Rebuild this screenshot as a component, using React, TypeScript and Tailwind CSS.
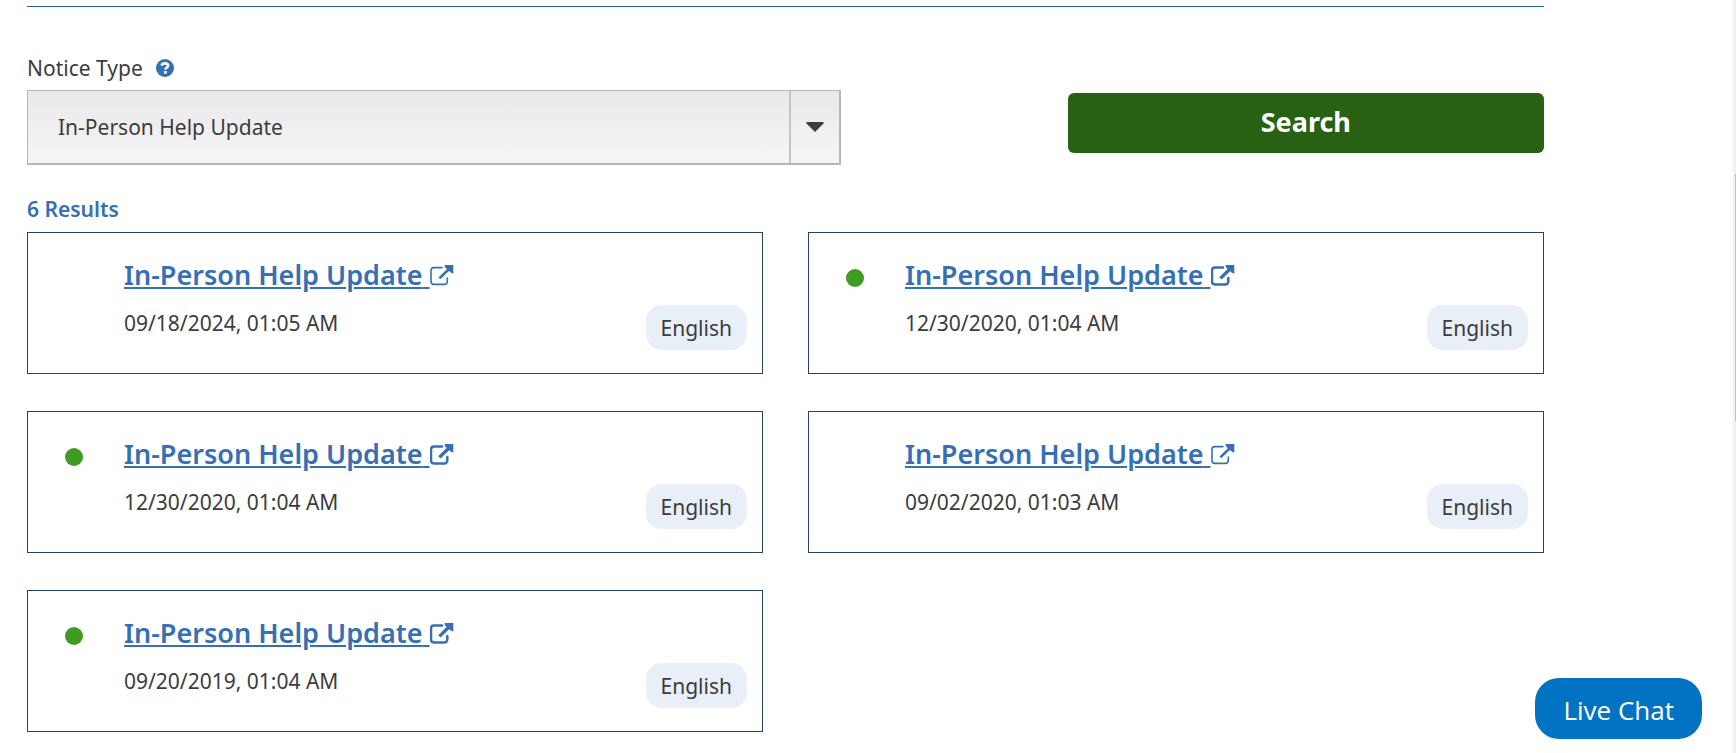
import { useState } from "react";

interface Notice {
  id: number;
  title: string;
  date: string;
  language: string;
  unread: boolean;
}

const notices: Notice[] = [
  { id: 1, title: "In-Person Help Update", date: "09/18/2024, 01:05 AM", language: "English", unread: false },
  { id: 2, title: "In-Person Help Update", date: "12/30/2020, 01:04 AM", language: "English", unread: true },
  { id: 3, title: "In-Person Help Update", date: "12/30/2020, 01:04 AM", language: "English", unread: true },
  { id: 4, title: "In-Person Help Update", date: "09/02/2020, 01:03 AM", language: "English", unread: false },
  { id: 5, title: "In-Person Help Update", date: "09/20/2019, 01:04 AM", language: "English", unread: true },
];

function ExternalIcon({ bold }: { bold: boolean }) {
  return (
    <svg
      className="inline-block h-6 w-6 align-[-3px]"
      viewBox="0 0 24 24"
      fill="none"
      stroke="currentColor"
      strokeWidth={bold ? 2.5 : 1.6}
      strokeLinecap="round"
      aria-hidden="true"
    >
      <path d="M12 3.6H3.8A2.8 2.8 0 0 0 1 6.4V17.6a2.8 2.8 0 0 0 2.8 2.8H14.5a2.8 2.8 0 0 0 2.8-2.8V14" />
      <path d="M9.4 14.4L19.5 4.5" strokeWidth={bold ? 3.4 : 2.6} strokeLinecap="butt" />
      <path d="M14.5 .9H23.3V9.8L20.6 8.6L15.2 3.4Z" fill="currentColor" stroke="none" />
    </svg>
  );
}

function NoticeCard({ notice }: { notice: Notice }) {
  return (
    <li className="flex h-[142px] border border-[#27426a]">
      <div className="w-24 shrink-0 pt-9 pl-[37px]">
        {notice.unread && <div className="h-[18px] w-[18px] rounded-full bg-[#409b22]" />}
      </div>
      <div className="min-w-0 flex-1 pt-6">
        <a href="#notice" className="text-[27px] leading-9 font-semibold text-[#366fb3] underline">
          {notice.title} <ExternalIcon bold={notice.unread} />
        </a>
        <p className="mt-4 text-[21px] leading-7">{notice.date}</p>
      </div>
      <div className="flex items-end pr-[15px] pb-[23px]">
        <span className="rounded-2xl bg-[#e8eff7] px-[15px] pt-[9px] pb-2 text-[21px] leading-7">{notice.language}</span>
      </div>
    </li>
  );
}

export default function App() {
  const [type, setType] = useState("In-Person Help Update");

  return (
    <div className="min-h-screen bg-white font-['Noto_Sans',sans-serif] text-[#3c3c3e]">
      <main className="pt-1.5 pr-48 pb-5 pl-[27px]">
        <hr className="border-[#286a86]" />

        {/* Filters */}
        <form className="mt-[47px] flex items-end justify-between" onSubmit={(e) => e.preventDefault()}>
          <div className="w-[53.65%]">
            <div className="flex items-center gap-[13px] leading-7">
              <label htmlFor="notice-type" className="text-[21px]">
                Notice Type
              </label>
              <button type="button" aria-label="Help" className="cursor-pointer text-[#366fb3]">
                <svg className="h-[18px] w-[18px]" viewBox="0 0 18 18" aria-hidden="true">
                  <circle cx="9" cy="9" r="9" fill="currentColor" />
                  <path
                    d="M5.6 6.6C6 5 7.3 4.4 8.9 4.4c1.9 0 3.2.9 3.2 2.4 0 2-2.8 1.7-2.8 3.8"
                    fill="none"
                    stroke="#fff"
                    strokeWidth="2.6"
                  />
                  <rect x="7.9" y="12" width="2.9" height="2.7" rx=".6" fill="#fff" />
                </svg>
              </button>
            </div>
            <div className="relative mt-2">
              <select
                id="notice-type"
                value={type}
                onChange={(e) => setType(e.target.value)}
                className="h-[75px] w-full appearance-none rounded-none border border-r-2 border-b-2 border-[#b7b7b7] bg-linear-to-b from-[#e9e9eb] to-[#f5f5f5] pt-0.5 pr-16 pl-[30px] text-[21px]"
              >
                <option>In-Person Help Update</option>
              </select>
              <div className="pointer-events-none absolute top-px right-0.5 bottom-0.5 flex w-[50px] items-center justify-center border-l-2 border-[#c4c4c4]">
                <svg className="h-2.5 w-[18px] text-[#3c3c3e]" viewBox="0 0 18 10" fill="currentColor" aria-hidden="true">
                  <path d="M.5 0h17v1.5L9 10 .5 1.5z" />
                </svg>
              </div>
            </div>
          </div>
          <button
            type="submit"
            className="mb-3 h-[60px] w-[31.4%] cursor-pointer rounded-md bg-[#286114] pb-0.5 text-[27px] leading-9 font-bold text-white"
          >
            Search
          </button>
        </form>

        {/* Results */}
        <h2 className="mt-[30px] text-[21px] leading-7 font-semibold text-[#366fb3]">6 Results</h2>
        <ul className="mt-[9px] grid grid-cols-2 gap-x-[45px] gap-y-[37px]">
          {notices.map((n) => (
            <NoticeCard key={n.id} notice={n} />
          ))}
        </ul>
      </main>

      <button
        type="button"
        className="fixed right-[34px] bottom-3.5 h-[61px] cursor-pointer rounded-3xl bg-[#0273c3] px-7 pt-1 text-[26px] font-['Open_Sans',sans-serif] text-white"
      >
        Live Chat
      </button>

      {/* Scroll track */}
      <div className="fixed inset-y-0 right-0 w-[3px] bg-[#f1f1f1] pt-[174px] pl-0.5">
        <div className="h-[247px] bg-[#c1c1c1]" />
      </div>
    </div>
  );
}
